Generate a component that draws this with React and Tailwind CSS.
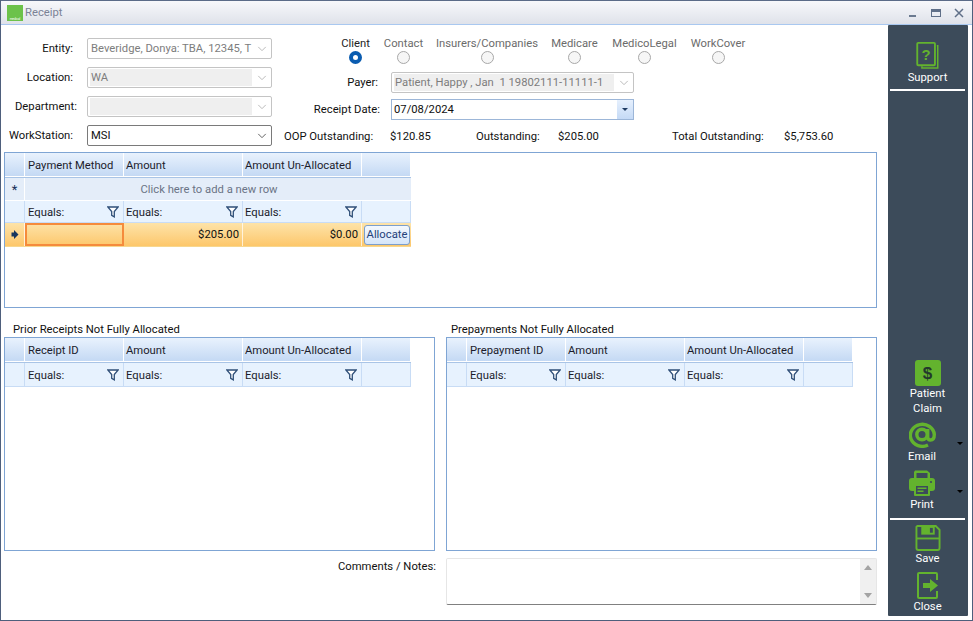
const font = { fontFamily: 'Roboto, "Noto Sans", sans-serif' };

function Chevron({ color = "#a0a0a0" }) {
  return (
    <svg width="10" height="6" viewBox="0 0 12 7" className="shrink-0">
      <path d="M1.5 1 L6 5.5 L10.5 1" fill="none" stroke={color} strokeWidth="1.1" />
    </svg>
  );
}

function Select({ value, disabled, className = "", fill = true }) {
  return (
    <div
      className={`flex h-[21px] items-center rounded-[2px] border bg-white pl-[2px] pr-[4px] ${
        disabled ? "border-[#c4c4c4]" : "border-[#7a7a7a]"
      } ${className}`}
    >
      <div
        className={`flex h-[17px] min-w-0 flex-1 items-center overflow-hidden whitespace-pre pl-[1px] ${
          disabled ? (fill ? "bg-[#efefef] text-[#7d7d7d]" : "text-[#7d7d7d]") : "text-[#111]"
        }`}
      >
        {value}
      </div>
      <div className="ml-[5px]">
        <Chevron color={disabled ? "#b5b5b5" : "#555"} />
      </div>
    </div>
  );
}

function FormRow({ label, labelClass, children }) {
  return (
    <div className="flex h-[21px] items-center">
      <div className={`shrink-0 ${labelClass}`}>{label}</div>
      {children}
    </div>
  );
}

function Radio({ label, active, className }) {
  return (
    <div className={`flex flex-col items-center ${className}`}>
      <span className={`h-[15px] leading-[15px] whitespace-nowrap ${active ? "text-[#222]" : "text-[#6b6b6b]"}`}>{label}</span>
      <span
        className={`block h-[13px] w-[13px] rounded-full ${
          active ? "border-[4px] border-[#0a5cb0] bg-white" : "border border-[#a8a8a8] bg-[#f6f6f6]"
        }`}
      />
    </div>
  );
}

function Funnel() {
  return (
    <svg width="12" height="12" viewBox="0 0 12 12" className="mt-[-1px] shrink-0">
      <path d="M0.8 1 H11.2 L7.3 5.6 V10.8 L4.7 9.4 V5.6 Z" fill="#fff" stroke="#2f4f78" strokeWidth="1.3" />
    </svg>
  );
}

const hdr = "flex items-center whitespace-nowrap border-r border-b border-white bg-gradient-to-b from-[#e9f2fd] to-[#c4d9f4] pt-[2px] pl-[2px] text-[#1c1c2c]";
const flt = "flex items-center justify-between border-r border-b border-[#c8dcf5] bg-[#e7f2fe] pt-[1px] pl-[2px] pr-[4px] text-[#1c1c2c]";
const cols = "grid grid-cols-[20px_99px_119px_119px_49px] w-[406px]";

function GridHead({ title }) {
  return (
    <div className={`${cols} h-[25px] border-b border-[#a9c4e6]`}>
      <div className={hdr} />
      <div className={`${hdr} pl-[3px]`}>{title}</div>
      <div className={hdr}>Amount</div>
      <div className={hdr}>Amount Un-Allocated</div>
      <div className={hdr} />
    </div>
  );
}

function GridFilter({ h = "h-[24px]" }) {
  return (
    <div className={`${cols} ${h}`}>
      <div className={flt} />
      <div className={`${flt} pl-[3px]`}>Equals:<Funnel /></div>
      <div className={flt}>Equals:<Funnel /></div>
      <div className={flt}>Equals:<Funnel /></div>
      <div className={flt} />
    </div>
  );
}

function SideItem({ label, children, arrow, className = "" }) {
  return (
    <div className={`relative flex flex-col items-center text-white ${className}`}>
      {children}
      <div className="text-center leading-[15px]">{label}</div>
      {arrow && <span className="absolute right-[2px] top-[20px] h-0 w-0 border-x-[3px] border-t-[3px] border-x-transparent border-t-black" />}
    </div>
  );
}

export default function App() {
  return (
    <div style={font} className="flex h-[621px] w-[973px] flex-col overflow-hidden border-x border-b border-[#4e5f7c] bg-white text-[11.25px] leading-[15px] text-[#111]">
      {/* Title bar */}
      <div className="flex h-[25px] shrink-0 items-center border-t border-b border-t-[#5b6b88] border-b-[#a9c8f0] bg-gradient-to-b from-[#f7f8fb] to-[#dfe2ea] pl-[6px] pr-[8px]">
        <div className="flex h-[16px] w-[16px] items-end justify-center bg-[#6cc24a]">
          <span className="text-[3px] leading-[4px] text-white">medical</span>
        </div>
        <span className="ml-[2px] text-[#7b8296]">Receipt</span>
        <div className="ml-auto flex items-center gap-[13px] text-[#5a6a80]">
          <svg width="10" height="10" viewBox="0 0 10 10"><rect x="1" y="7" width="7" height="2" fill="#6b7a90" /></svg>
          <svg width="10" height="10" viewBox="0 0 10 10"><rect x="0.5" y="1.5" width="9" height="7" fill="none" stroke="#5f6f88" /><rect x="0.5" y="1.5" width="9" height="2.5" fill="#5f6f88" /></svg>
          <svg width="10" height="10" viewBox="0 0 10 10"><path d="M1 1 L9 9 M9 1 L1 9" stroke="#5f6f88" strokeWidth="1.5" /></svg>
        </div>
      </div>

      <div className="flex min-h-0 flex-1">
        {/* Main */}
        <div className="min-w-0 flex-1 pl-[3px] pr-[11px]">
          <div className="flex h-[126px] pt-[11px]">
            {/* Left form */}
            <div className="flex w-[268px] shrink-0 flex-col gap-[8px] pt-[2px]">
              <FormRow label="Entity:" labelClass="w-[83px] pr-[14px] text-right">
                <Select disabled fill={false} value="Beveridge, Donya: TBA, 12345, T" className="w-[185px]" />
              </FormRow>
              <FormRow label="Location:" labelClass="w-[83px] pr-[14px] text-right">
                <Select disabled value="WA" className="w-[185px]" />
              </FormRow>
              <FormRow label="Department:" labelClass="w-[83px] pr-[10px] text-right">
                <Select disabled value="" className="w-[185px]" />
              </FormRow>
              <FormRow label="WorkStation:" labelClass="w-[83px] pl-[5px]">
                <Select value="MSI" className="w-[185px]" />
              </FormRow>
            </div>
            {/* Right form */}
            <div className="min-w-0 flex-1">
              <div className="flex h-[28px] pl-[69px]">
                <Radio active label="Client" className="w-[29px]" />
                <Radio label="Contact" className="ml-[14px] w-[39px]" />
                <Radio label="Insurers/Companies" className="ml-[14px] w-[100px]" />
                <Radio label="Medicare" className="ml-[14px] w-[47px]" />
                <Radio label="MedicoLegal" className="ml-[14px] w-[65px]" />
                <Radio label="WorkCover" className="ml-[13px] w-[56px]" />
              </div>
              <div className="mt-[8px] flex flex-col gap-[6px]">
                <FormRow label="Payer:" labelClass="w-[119px] pr-[13px] text-right">
                  <Select disabled value="Patient, Happy , Jan  1 19802111-11111-1" className="w-[243px]" />
                </FormRow>
                <FormRow label="Receipt Date:" labelClass="w-[119px] pr-[11px] text-right">
                  <div className="flex h-[21px] w-[243px] items-center border border-[#9cb6d8] pl-[2px]">
                    <span className="flex-1">07/08/2024</span>
                    <div className="flex h-[19px] w-[16px] items-center justify-center bg-gradient-to-b from-[#e6f0fd] to-[#c5daf6]">
                      <span className="h-0 w-0 border-x-[3px] border-t-[3px] border-x-transparent border-t-[#1f3b63]" />
                    </div>
                  </div>
                </FormRow>
              </div>
            </div>
          </div>

          {/* Totals */}
          <div className="mt-[-22px] flex h-[22px] items-start pl-[280px]">
            <span className="w-[106px]">OOP Outstanding:</span>
            <span className="w-[86px]">$120.85</span>
            <span className="w-[82px]">Outstanding:</span>
            <span className="w-[114px]">$205.00</span>
            <span className="w-[112px]">Total Outstanding:</span>
            <span>$5,753.60</span>
          </div>

          {/* Payment grid */}
          <div className="mt-[1px] h-[156px] border border-[#7fa5d4]">
            <GridHead title="Payment Method" />
            <div className={`${cols} h-[23px]`}>
              <div className="flex items-center justify-center border-r border-b border-white bg-[#e4edf9] text-[13px] text-[#14305a]">*</div>
              <div className="col-span-4 flex items-center justify-center border-b border-white bg-[#e4edf9] pr-[18px] text-[#6b7486]">Click here to add a new row</div>
            </div>
            <GridFilter h="h-[22px]" />
            <div className={`${cols} h-[24px] border-b border-[#f7d78f] bg-gradient-to-b from-[#fde3a8] to-[#fdc76a]`}>
              <div className="flex items-center justify-center border-r border-white/70">
                <svg width="8" height="9" viewBox="0 0 8 9"><path d="M3 0 L7.5 4.5 L3 9 V6.5 H0.5 V2.5 H3 Z" fill="#17365f" /></svg>
              </div>
              <div className="border-2 border-[#f58b3c]" />
              <div className="flex items-center justify-end border-r border-white/70 pr-[3px]">$205.00</div>
              <div className="flex items-center justify-end border-r border-white/70 pr-[3px]">$0.00</div>
              <div className="flex items-center justify-center pl-[1px]">
                <div className="flex h-[20px] w-[46px] items-center justify-center rounded-[3px] border border-[#7c9fcc] bg-gradient-to-b from-[#f3f8fe] to-[#d5e5f9] text-[#24427a]">Allocate</div>
              </div>
            </div>
          </div>

          {/* Lower panels */}
          <div className="mt-[13px] grid grid-cols-[431px_431px] gap-x-[11px]">
            <div>
              <div className="h-[16px] pl-[9px] pt-[1px] leading-[15px]">Prior Receipts Not Fully Allocated</div>
              <div className="h-[214px] border border-[#7fa5d4]">
                <GridHead title="Receipt ID" />
                <GridFilter />
              </div>
            </div>
            <div>
              <div className="h-[16px] pl-[5px] pt-[1px] leading-[15px]">Prepayments Not Fully Allocated</div>
              <div className="h-[214px] border border-[#7fa5d4]">
                <GridHead title="Prepayment ID" />
                <GridFilter />
              </div>
            </div>
          </div>

          {/* Comments */}
          <div className="mt-[7px] flex">
            <div className="w-[432px] pt-[1px] text-right">Comments / Notes:</div>
            <div className="ml-[10px] flex h-[47px] w-[431px] justify-end rounded-[2px] border border-[#e6e6e6] border-b-[#808080] bg-white">
              <div className="flex w-[16px] flex-col items-center justify-between bg-[#f0f0f0] py-[6px]">
                <span className="h-0 w-0 border-x-[4px] border-b-[5px] border-x-transparent border-b-[#a3a3a3]" />
                <span className="h-0 w-0 border-x-[4px] border-t-[5px] border-x-transparent border-t-[#a3a3a3]" />
              </div>
            </div>
          </div>
        </div>

        {/* Sidebar */}
        <div className="mr-[4px] mb-[4px] flex w-[80px] shrink-0 flex-col justify-between rounded-[1px] bg-[#3c4b5a] pl-[2px] pr-[3px] pb-[2px] pt-[17px]">
          <div>
            <SideItem label="Support">
              <svg width="23" height="27" viewBox="0 0 24 29" className="mb-[1px]">
                <path d="M22 4 H23 V28 H6 V26" fill="none" stroke="#63b32e" strokeWidth="1.6" />
                <rect x="1" y="1" width="19" height="24" rx="1" fill="none" stroke="#63b32e" strokeWidth="2" />
                <text x="10.5" y="19" textAnchor="middle" fontFamily="Liberation Sans" fontWeight="700" fontSize="16" fill="#63b32e">?</text>
              </svg>
            </SideItem>
            <div className="mt-[4px] h-[2px] bg-white" />
          </div>
          <div>
            <SideItem label={<>Patient<br />Claim</>} className="mb-[6px]">
              <div className="flex h-[26px] w-[26px] items-center justify-center rounded-[3px] bg-[#63b32e] text-[17px] font-bold leading-none text-[#23392c]" style={{ fontFamily: '"Liberation Sans", sans-serif' }}>$</div>
            </SideItem>
            <SideItem label="Email" arrow className="mb-[6px] pr-[11px]">
              <svg width="27" height="26" viewBox="0 0 27 26" className="mb-[1px]">
                <g fill="none" stroke="#63b32e" strokeWidth="3.4">
                  <circle cx="13" cy="12.5" r="5.2" />
                  <path d="M18.7 7 V15 Q18.7 18 21.5 18 Q25.3 18 25.3 12.5 A12 11 0 1 0 19 23" />
                </g>
              </svg>
            </SideItem>
            <SideItem label="Print" arrow className="pr-[11px]">
              <svg width="26" height="26" viewBox="0 0 26 26" className="mb-[1px]">
                <path d="M6 0.5 H18 L21 3 V9 H5 V2 Z" fill="#63b32e" />
                <rect x="7.5" y="3" width="11" height="5" fill="#3c4b5a" />
                <rect x="0" y="8" width="26" height="13" rx="3" fill="#63b32e" />
                <circle cx="22" cy="12" r="1.1" fill="#3c4b5a" />
                <rect x="5" y="14" width="16" height="12" rx="1" fill="#63b32e" />
                <rect x="7" y="16" width="12" height="8" fill="#3c4b5a" />
                <rect x="8.5" y="17.5" width="9" height="1.5" fill="#63b32e" />
                <rect x="8.5" y="20.5" width="6" height="1.5" fill="#63b32e" />
              </svg>
            </SideItem>
            <div className="mt-[6px] h-[2px] bg-white" />
            <SideItem label="Save" className="mt-[5px] mb-[6px]">
              <svg width="26" height="26" viewBox="0 0 26 27">
                <path d="M2 1 H21 L25 5 V24 Q25 26 23 26 H3 Q1 26 1 24 V2 Z" fill="none" stroke="#63b32e" strokeWidth="2" />
                <path d="M6 1 V10 H20 V1 Z" fill="#63b32e" />
                <rect x="15" y="3" width="3" height="5" fill="#3c4b5a" />
                <path d="M1 14 H25" stroke="#63b32e" strokeWidth="2" />
              </svg>
            </SideItem>
            <SideItem label="Close">
              <svg width="22" height="27" viewBox="0 0 22 27">
                <path d="M20 8 V2 Q20 1 19 1 H2 Q1 1 1 2 V25 Q1 26 2 26 H19 Q20 26 20 25 V19" fill="none" stroke="#63b32e" strokeWidth="2" />
                <path d="M6 11 H13 V7 L21 13.5 L13 20 V16 H6 Z" fill="#63b32e" />
              </svg>
            </SideItem>
          </div>
        </div>
      </div>
    </div>
  );
}
